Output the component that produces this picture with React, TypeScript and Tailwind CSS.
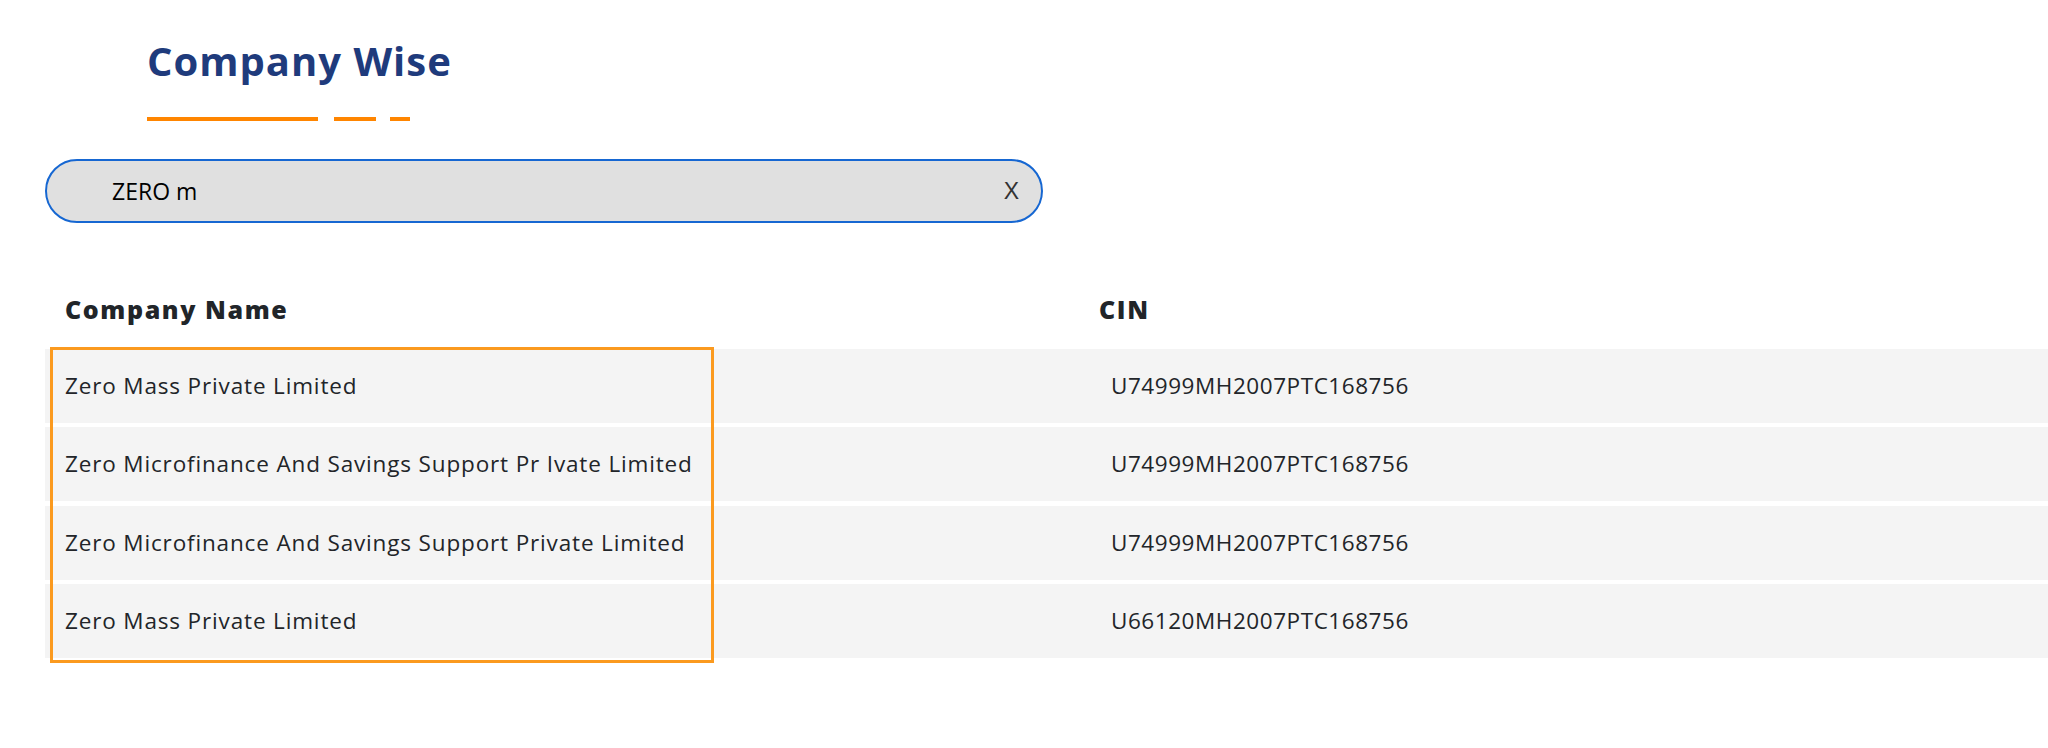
import React from "react";

const rows = [
  { name: "Zero Mass Private Limited", cin: "U74999MH2007PTC168756" },
  { name: "Zero Microfinance And Savings Support Pr Ivate Limited", cin: "U74999MH2007PTC168756" },
  { name: "Zero Microfinance And Savings Support Private Limited", cin: "U74999MH2007PTC168756" },
  { name: "Zero Mass Private Limited", cin: "U66120MH2007PTC168756" },
];

export default function App() {
  return (
    <div className="w-[2048px] h-[748px] bg-white overflow-hidden pl-[45px] pt-[37px] font-['Open_Sans',sans-serif]">
      <div className="ml-[102px]">
        <h1 className="text-[40px] leading-[48px] font-bold text-[#1f3b7c] tracking-[1px]">Company Wise</h1>
        <div className="mt-[32px] flex items-center h-[4px]">
          <div className="w-[171px] h-[4px] bg-[#ff8500]" />
          <div className="ml-[16px] w-[42px] h-[4px] bg-[#ff8500]" />
          <div className="ml-[14px] w-[20px] h-[4px] bg-[#ff8500]" />
        </div>
      </div>

      <div className="mt-[38px] w-[998px] h-[64px] rounded-full border-2 border-[#1667d2] bg-[#e0e0e0] flex items-center justify-between pl-[65px] pr-[22px]">
        <span className="text-[23px] text-black">ZERO m</span>
        <span className="text-[23px] text-[#333] font-['Liberation_Sans',sans-serif]">X</span>
      </div>

      <div className="mt-[70px] grid grid-cols-[1034px_1fr] h-[32px] items-center text-[25px] leading-[32px] font-extrabold text-[#212529] tracking-[1.6px]">
        <div className="pl-[20px]">Company Name</div>
        <div className="pl-[20px]">CIN</div>
      </div>

      <div className="relative mt-[24px]">
        <div className="flex flex-col gap-[4.33px]">
          {rows.map((r, i) => (
            <div key={i} className="grid grid-cols-[1034px_1fr] h-[74px] items-center bg-[#f4f4f4] text-[22.5px] text-[#222529]">
              <div className="pl-[20px] tracking-[0.85px]">{r.name}</div>
              <div className="pl-[32px] tracking-[0.55px]">{r.cin}</div>
            </div>
          ))}
        </div>
        <div className="absolute left-[5px] top-[-2px] w-[664px] h-[316px] border-[3px] border-[#fb9a1f] pointer-events-none" />
      </div>
    </div>
  );
}
